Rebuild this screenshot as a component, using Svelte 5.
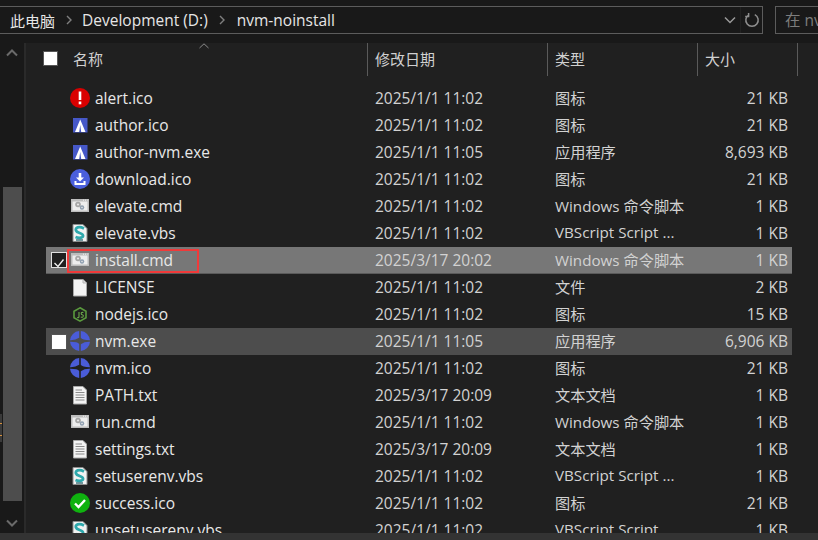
<script lang="ts">
  // Explorer folder view, dark theme
  type Row = { name: string; date: string; type: string; size: string; icon: string; state?: string };

  const rows: Row[] = [
    { name: 'alert.ico', date: '2025/1/1 11:02', type: '图标', size: '21 KB', icon: 'alert' },
    { name: 'author.ico', date: '2025/1/1 11:02', type: '图标', size: '21 KB', icon: 'author' },
    { name: 'author-nvm.exe', date: '2025/1/1 11:05', type: '应用程序', size: '8,693 KB', icon: 'author' },
    { name: 'download.ico', date: '2025/1/1 11:02', type: '图标', size: '21 KB', icon: 'download' },
    { name: 'elevate.cmd', date: '2025/1/1 11:02', type: 'Windows 命令脚本', size: '1 KB', icon: 'cmd' },
    { name: 'elevate.vbs', date: '2025/1/1 11:02', type: 'VBScript Script ...', size: '1 KB', icon: 'vbs' },
    { name: 'install.cmd', date: '2025/3/17 20:02', type: 'Windows 命令脚本', size: '1 KB', icon: 'cmd', state: 'selected' },
    { name: 'LICENSE', date: '2025/1/1 11:02', type: '文件', size: '2 KB', icon: 'file' },
    { name: 'nodejs.ico', date: '2025/1/1 11:02', type: '图标', size: '15 KB', icon: 'node' },
    { name: 'nvm.exe', date: '2025/1/1 11:05', type: '应用程序', size: '6,906 KB', icon: 'nvm', state: 'hover' },
    { name: 'nvm.ico', date: '2025/1/1 11:02', type: '图标', size: '21 KB', icon: 'nvm' },
    { name: 'PATH.txt', date: '2025/3/17 20:09', type: '文本文档', size: '1 KB', icon: 'txt' },
    { name: 'run.cmd', date: '2025/1/1 11:02', type: 'Windows 命令脚本', size: '1 KB', icon: 'cmd' },
    { name: 'settings.txt', date: '2025/3/17 20:09', type: '文本文档', size: '1 KB', icon: 'txt' },
    { name: 'setuserenv.vbs', date: '2025/1/1 11:02', type: 'VBScript Script ...', size: '1 KB', icon: 'vbs' },
    { name: 'success.ico', date: '2025/1/1 11:02', type: '图标', size: '21 KB', icon: 'success' },
    { name: 'unsetuserenv.vbs', date: '2025/1/1 11:02', type: 'VBScript Script ...', size: '1 KB', icon: 'vbs' }
  ];
</script>

{#snippet fileIcon(kind: string)}
  <svg class="icon" width="20" height="20" viewBox="0 0 20 20">
    {#if kind === 'alert'}
      <circle cx="10" cy="10" r="10" fill="#d90000" />
      <rect x="8.7" y="3.5" width="2.6" height="8.5" fill="#fff" />
      <rect x="8.7" y="13.5" width="2.6" height="2.8" fill="#fff" />
    {:else if kind === 'author'}
      <rect x="3" y="3" width="14.5" height="14.5" fill="#4658c8" />
      <path d="M10.2 4.5 L15.5 17 H11.2 L10.2 10 L9.2 17 H5 Z" fill="#fff" />
    {:else if kind === 'download'}
      <circle cx="10" cy="10" r="10" fill="#4a5fdc" />
      <path d="M8.7 4 H11.3 V8.5 H14 L10 12.5 L6 8.5 H8.7 Z" fill="#fff" />
      <path d="M4.5 12 H6.5 V14 H13.5 V12 H15.5 V16 H4.5 Z" fill="#fff" />
    {:else if kind === 'cmd'}
      <rect x="1" y="3" width="18" height="13" fill="#bdbdbd" />
      <rect x="2.5" y="5.5" width="15" height="9" fill="#eeeeee" />
      <path d="M13 4.2 H17.5" stroke="#f2f2f2" stroke-width="1" stroke-dasharray="1 1" />
      <circle cx="8" cy="8.5" r="2.8" fill="#a6a6a6" />
      <circle cx="8" cy="8.5" r="1.1" fill="#e8e8e8" />
      <circle cx="12" cy="11.5" r="2.2" fill="#8f9fb0" />
      <circle cx="12" cy="11.5" r="0.8" fill="#e8e8e8" />
    {:else if kind === 'vbs'}
      <path d="M3 1.5 H13 L17 5.5 V18.5 H3 Z" fill="#f2f2f2" stroke="#8c8c8c" stroke-width="1" />
      <path d="M14 5.5 C9 3 5 4.5 6 7.5 C7 10.5 12.5 9.5 13 12.5 C13.3 15 9 15.5 5.5 14" fill="none" stroke="#2fa8ac" stroke-width="2.8" />
      <path d="M6 17 H13" stroke="#3a6f78" stroke-width="1.4" />
    {:else if kind === 'file'}
      <path d="M3.5 2.5 H13 L16.5 6 V19 H3.5 Z" fill="#f3f3f3" stroke="#a8a8a8" stroke-width="1" />
      <path d="M13 2.5 V6 H16.5" fill="#dcdcdc" stroke="#b5b5b5" stroke-width="1" />
    {:else if kind === 'txt'}
      <path d="M3.5 1.5 H13 L16.5 5 V19 H3.5 Z" fill="#f3f3f3" stroke="#a8a8a8" stroke-width="1" />
      <path d="M5.5 5 H12 M5.5 7.5 H14.5 M5.5 10 H14.5 M5.5 12.5 H14.5 M5.5 15 H14.5" stroke="#8a8a8a" stroke-width="1" />
    {:else if kind === 'node'}
      <path d="M10 3.8 L16 7.2 V13.8 L10 17.2 L4 13.8 V7.2 Z" fill="none" stroke="#5a9a3e" stroke-width="1.6" />
      <path d="M9 8 V12.5 Q9 14 7.2 13.5 M13.4 8.6 Q11.2 7.8 11.2 9.4 Q11.2 10.4 12.4 10.7 Q13.8 11 13 12.8 Q12.2 13.6 10.8 13.1" fill="none" stroke="#6aa84a" stroke-width="1.1" />
    {:else if kind === 'nvm'}
      <path d="M9.2 0 V6.8 Q5.5 9.4 0 9.2 A10 10 0 0 1 9.2 0 Z" fill="#4a5cd8" />
      <path d="M10.8 0 V6.8 Q12 9.2 20 9.2 A10 10 0 0 0 10.8 0 Z" fill="#4a5cd8" />
      <path d="M9.2 20 V13.2 Q8 10.8 0 10.8 A10 10 0 0 0 9.2 20 Z" fill="#4a5cd8" />
      <path d="M10.8 20 V13.2 Q14.5 10.6 20 10.8 A10 10 0 0 1 10.8 20 Z" fill="#4a5cd8" />
    {:else if kind === 'success'}
      <circle cx="10" cy="10" r="10" fill="#0fb20f" />
      <path d="M5 10.5 L8.5 14 L15 7" fill="none" stroke="#fff" stroke-width="2.4" />
    {/if}
  </svg>
{/snippet}

<div class="window">
  <header class="topbar">
    <div class="address">
      <span class="crumb zh">此电脑</span>
      <svg class="sep" width="6" height="10" viewBox="0 0 6 10"><path d="M1 1 L5 5 L1 9" fill="none" stroke="#7f7f7f" stroke-width="1.4" /></svg>
      <span class="crumb">Development (D:)</span>
      <svg class="sep wide" width="6" height="10" viewBox="0 0 6 10"><path d="M1 1 L5 5 L1 9" fill="none" stroke="#7f7f7f" stroke-width="1.4" /></svg>
      <span class="crumb">nvm-noinstall</span>
      <span class="spacer"></span>
      <svg class="drop" width="12" height="8" viewBox="0 0 12 8"><path d="M1 1.5 L6 6.5 L11 1.5" fill="none" stroke="#9a9a9a" stroke-width="1.5" /></svg>
      <span class="refresh">
        <svg width="16" height="16" viewBox="0 0 16 16"><path d="M5.2 2.6 A6.2 6.2 0 1 0 10.8 2.6 M4.6 1 V4.6 H1.2" fill="none" stroke="#8f8f8f" stroke-width="1.5" /></svg>
      </span>
    </div>
    <div class="search">在 nvm-noinstall 中搜索</div>
  </header>

  <div class="main">
    <aside class="rail">
      <svg class="up" width="12" height="8" viewBox="0 0 12 8"><path d="M1 6.5 L6 1.5 L11 6.5" fill="none" stroke="#6a6a6a" stroke-width="2" /></svg>
      <div class="track"><div class="thumb"></div></div>
      <svg class="down" width="12" height="8" viewBox="0 0 12 8"><path d="M1 1.5 L6 6.5 L11 1.5" fill="none" stroke="#6a6a6a" stroke-width="2" /></svg>
      <div class="peek"><i></i><i></i></div>
    </aside>

    <section class="list">
      <div class="head">
        <div class="col name">
          <span class="check on"></span>
          <span class="label">名称</span>
          <svg class="caret" width="10" height="6" viewBox="0 0 10 6"><path d="M0.5 5 L5 0.8 L9.5 5" fill="none" stroke="#8a8a8a" stroke-width="1" /></svg>
        </div>
        <div class="col date">修改日期</div>
        <div class="col type">类型</div>
        <div class="col size">大小</div>
      </div>

      {#each rows as row (row.name)}
        <div class="row {row.state ?? ''}">
          <div class="cell name">
            {#if row.state === 'selected'}
              <span class="check ticked">
                <svg width="14" height="14" viewBox="0 0 14 14"><path d="M2.5 7 L6 10.5 L11.5 3.5" fill="none" stroke="#f0f0f0" stroke-width="1.4" /></svg>
              </span>
            {:else if row.state === 'hover'}
              <span class="check on"></span>
            {/if}
            <span class="icon-slot">{@render fileIcon(row.icon)}</span>
            <span class="filename">{row.name}</span>
            {#if row.state === 'selected'}<span class="mark"></span>{/if}
          </div>
          <div class="cell date">{row.date}</div>
          <div class="cell type">{row.type}</div>
          <div class="cell size">{row.size}</div>
        </div>
      {/each}
    </section>
  </div>

  <div class="status"></div>
</div>

<style>
  :global(body) {
    margin: 0;
    background: #202020;
  }

  .window {
    display: flex;
    flex-direction: column;
    width: 818px;
    height: 540px;
    overflow: hidden;
    color: #e8e8e8;
    font-family: "Open Sans", "Noto Sans CJK SC", sans-serif;
    font-size: 15.5px;
  }

  .topbar {
    display: flex;
    flex: none;
    gap: 12px;
    height: 43px;
    padding-top: 6px;
    box-sizing: border-box;
    background: #191919;
  }

  .address {
    display: flex;
    flex: none;
    align-items: center;
    width: 763px;
    height: 28px;
    box-sizing: border-box;
    padding-left: 10px;
    border: 1px solid #5c5c5c;
    border-left: 0;
  }

  .crumb {
    color: #e6e6e6;
    white-space: nowrap;
  }

  .crumb.zh {
    font-size: 15px;
  }

  .sep {
    margin: 0 10.5px;
  }

  .sep.wide {
    margin: 0 11.5px;
  }

  .spacer {
    flex: 1;
  }

  .drop {
    margin-right: 4px;
  }

  .refresh {
    display: flex;
    align-items: center;
    justify-content: center;
    width: 21px;
    height: 26px;
    border-left: 1px solid #222;
  }

  .search {
    flex: none;
    width: 200px;
    height: 28px;
    box-sizing: border-box;
    padding-left: 9px;
    line-height: 26px;
    color: #7d7d7d;
    white-space: nowrap;
    border: 1px solid #5c5c5c;
  }

  .main {
    display: flex;
    flex: 1;
    min-height: 0;
  }

  .rail {
    position: relative;
    display: flex;
    flex: none;
    flex-direction: column;
    align-items: center;
    width: 24px;
    padding-right: 0;
    background: #191919;
    border-right: 2px solid #2a2a2a;
  }

  .up {
    flex: none;
    margin-top: 6px;
  }

  .track {
    flex: 1;
    width: 100%;
    padding-top: 130px;
    padding-bottom: 18px;
    box-sizing: border-box;
    display: flex;
    justify-content: center;
  }

  .thumb {
    width: 19px;
    height: 100%;
    background: #4d4d4d;
  }

  .down {
    flex: none;
    margin-bottom: 6px;
  }

  .peek {
    position: absolute;
    left: 0;
    top: 371px;
    display: flex;
    flex-direction: column;
    gap: 11px;
    width: 2px;
    height: 28px;
    padding-top: 9px;
    box-sizing: border-box;
    background: #3a3a3a;
  }

  .peek i {
    display: block;
    width: 2px;
    height: 1px;
    background: #d9913c;
  }

  .list {
    flex: 1;
    min-width: 0;
    overflow: hidden;
    background: #202020;
  }

  .head {
    display: flex;
    height: 42px;
    color: #d0d0d0;
    font-size: 15px;
  }

  .col {
    position: relative;
    display: flex;
    align-items: center;
    height: 33px;
    box-sizing: border-box;
    padding-left: 7px;
    padding-bottom: 2px;
    border-right: 1px solid #5a5a5a;
  }

  .col.name {
    width: 342px;
    padding-left: 17px;
  }

  .col.date {
    width: 180px;
  }

  .col.type {
    width: 150px;
  }

  .col.size {
    width: 100px;
  }

  .label {
    margin-left: 15px;
  }

  .caret {
    position: absolute;
    left: 173px;
    top: 0;
  }

  .check {
    display: block;
    flex: none;
    box-sizing: border-box;
    width: 15px;
    height: 15px;
    border: 1px solid #555;
  }

  .check.on {
    background: #fff;
  }

  .check.ticked {
    position: absolute;
    left: 5px;
    top: 5px;
    width: 16px;
    height: 16px;
    background: #202020;
    border-color: #e0e0e0;
  }

  .row {
    position: relative;
    display: flex;
    align-items: center;
    height: 27px;
    width: 767px;
    padding-bottom: 1px;
    box-sizing: border-box;
  }

  .row.selected {
    margin-left: 20px;
    width: 746px;
    background: #777;
    box-shadow: inset 0 -1px 0 #5a5a5a;
  }

  .row.hover {
    margin-left: 20px;
    width: 746px;
    background: #4d4d4d;
  }

  .row.hover .check.on {
    position: absolute;
    left: 5px;
    top: 6px;
    width: 16px;
    height: 16px;
  }

  .cell {
    white-space: nowrap;
  }

  .cell.name {
    display: flex;
    align-items: center;
    width: 349px;
    padding-left: 44px;
    box-sizing: border-box;
  }

  .row.selected .cell.name,
  .row.hover .cell.name {
    width: 329px;
    padding-left: 24px;
  }

  .icon-slot {
    display: flex;
    flex: none;
    width: 25px;
    margin-top: -1px;
  }

  .cell.date,
  .cell.type,
  .cell.size {
    color: #d2d2d2;
  }

  .cell.date {
    width: 180px;
  }

  .cell.type {
    width: 150px;
    margin-bottom: 2px;
    font-size: 15.2px;
  }

  .cell.size {
    width: 83px;
    text-align: right;
  }

  .mark {
    position: absolute;
    left: 21px;
    top: 2px;
    width: 132px;
    height: 24px;
    box-sizing: border-box;
    border: 2px solid #f03a3a;
  }

  .status {
    flex: none;
    height: 7px;
    background: #333;
  }
</style>
